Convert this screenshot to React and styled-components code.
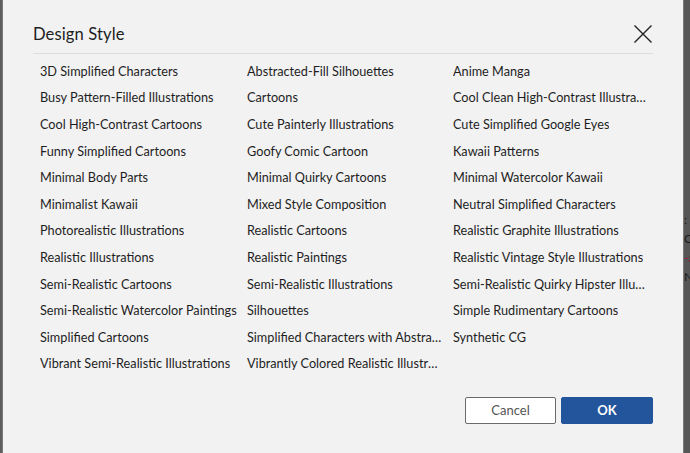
import React from "react";
import styled, { createGlobalStyle } from "styled-components";

const GlobalStyle = createGlobalStyle`
  html, body {
    margin: 0;
    padding: 0;
    height: 453px;
    overflow: hidden;
    background: #4d4d4d;
  }
  * { box-sizing: border-box; }
`;

const styles = [
  ["3D Simplified Characters", "Abstracted-Fill Silhouettes", "Anime Manga"],
  ["Busy Pattern-Filled Illustrations", "Cartoons", "Cool Clean High-Contrast Illustrations"],
  ["Cool High-Contrast Cartoons", "Cute Painterly Illustrations", "Cute Simplified Google Eyes"],
  ["Funny Simplified Cartoons", "Goofy Comic Cartoon", "Kawaii Patterns"],
  ["Minimal Body Parts", "Minimal Quirky Cartoons", "Minimal Watercolor Kawaii"],
  ["Minimalist Kawaii", "Mixed Style Composition", "Neutral Simplified Characters"],
  ["Photorealistic Illustrations", "Realistic Cartoons", "Realistic Graphite Illustrations"],
  ["Realistic Illustrations", "Realistic Paintings", "Realistic Vintage Style Illustrations"],
  ["Semi-Realistic Cartoons", "Semi-Realistic Illustrations", "Semi-Realistic Quirky Hipster Illustrations"],
  ["Semi-Realistic Watercolor Paintings", "Silhouettes", "Simple Rudimentary Cartoons"],
  ["Simplified Cartoons", "Simplified Characters with Abstract Shapes", "Synthetic CG"],
  ["Vibrant Semi-Realistic Illustrations", "Vibrantly Colored Realistic Illustrations"],
];

const Screen = styled.div`
  display: flex;
  height: 453px;
  width: 690px;
  overflow: hidden;
  font-family: "Lato", "Open Sans", sans-serif;
`;

const SideStrip = styled.div`
  flex: 0 0 ${(p) => p.$w}px;
  background: ${(p) => p.$bg};
  overflow: hidden;
  display: flex;
  flex-direction: column;
  align-items: flex-start;
  padding-top: ${(p) => p.$top}px;
  border-${(p) => (p.$right ? "left" : "right")}: 1px solid #7a7a7a;
`;

const PeekLine = styled.span`
  font-size: 12px;
  line-height: 19px;
  height: 19px;
  white-space: nowrap;
  color: ${(p) => p.$color || "#1a1a1a"};
`;

const Dialog = styled.div`
  flex: 1;
  background: #f2f2f2;
  padding: 0 30px;
  display: flex;
  flex-direction: column;
`;

const Header = styled.div`
  display: flex;
  align-items: center;
  justify-content: space-between;
  height: 54px;
  padding-top: 14px;
  border-bottom: 1px solid #dedede;
`;

const Title = styled.h2`
  margin: 0;
  font-size: 16.6px;
  font-weight: 400;
  color: #1e1e1e;
  letter-spacing: 0.1px;
`;

const CloseButton = styled.button`
  border: 0;
  background: none;
  padding: 0;
  width: 20px;
  height: 20px;
  cursor: pointer;
  display: flex;
`;

const Grid = styled.div`
  display: grid;
  grid-template-columns: 207px 206px 200px;
  grid-auto-rows: 26.6px;
  padding: 3.5px 0 0 7px;
`;

const Item = styled.div`
  font-size: 12.7px;
  color: #1e1e1e;
  display: flex;
  align-items: center;
  min-width: 0;
`;

const Label = styled.span`
  white-space: nowrap;
  overflow: hidden;
  text-overflow: ellipsis;
  max-width: ${(p) => (p.$wide ? 205 : 196)}px;
`;

const Footer = styled.div`
  display: flex;
  justify-content: flex-end;
  gap: 5px;
  margin-top: 20px;
`;

const Button = styled.button`
  width: ${(p) => p.$w}px;
  height: 27px;
  border-radius: 2px;
  font-family: inherit;
  font-size: 13px;
  cursor: pointer;
  ${(p) =>
    p.$primary
      ? `background: #22559c; color: #fff; border: 1px solid #22559c; font-weight: 700;`
      : `background: #fff; color: #555; border: 1px solid #6b6b6b; font-weight: 400;`}
`;

export default function App() {
  return (
    <>
      <GlobalStyle />
      <Screen>
        <SideStrip $w={3} $bg="#5e5e5e" $top={60} />
        <Dialog>
          <Header>
            <Title>Design Style</Title>
            <CloseButton aria-label="Close">
              <svg width="20" height="20" viewBox="0 0 20 20">
                <path d="M1.5 1.5 L18.5 18.5 M18.5 1.5 L1.5 18.5" stroke="#222" strokeWidth="1.4" fill="none" />
              </svg>
            </CloseButton>
          </Header>
          <Grid>
            {styles.flatMap((row, r) =>
              row.map((name, c) => (
                <Item key={`${r}-${c}`} title={name}>
                  <Label $wide={c === 0}>{name}</Label>
                </Item>
              ))
            )}
          </Grid>
          <Footer>
            <Button $w={91}>Cancel</Button>
            <Button $w={92} $primary>OK</Button>
          </Footer>
        </Dialog>
        <SideStrip $w={7} $bg="#565656" $top={210} $right>
          <PeekLine>: I</PeekLine>
          <PeekLine>Co</PeekLine>
          <PeekLine $color="#a01838">-a</PeekLine>
          <PeekLine>N</PeekLine>
        </SideStrip>
      </Screen>
    </>
  );
}
